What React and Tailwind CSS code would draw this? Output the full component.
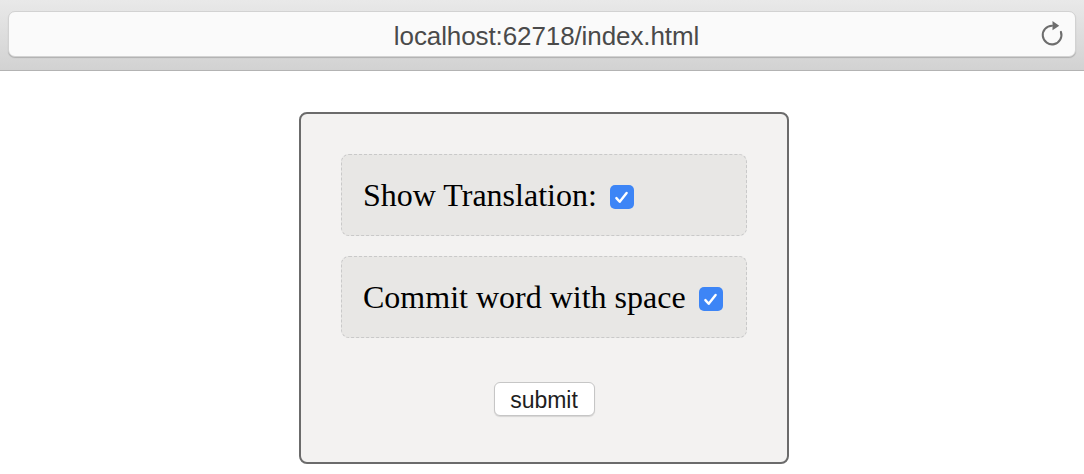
import { useState } from 'react';

const CheckBox = ({ checked, onChange }) => (
    <button
        type="button"
        onClick={onChange}
        className={`ml-[5px] mt-[4px] w-[24px] h-[24px] rounded-[5px] flex items-center justify-center shrink-0 ${checked ? 'bg-[#3d85f6]' : 'bg-white border border-[#999]'}`}
    >
        {checked && (
            <svg width="17" height="17" viewBox="0 0 16 16" fill="none">
                <path d="M3.2 8.6l3.1 3.4L12.8 3.8" stroke="white" strokeWidth="2.3" strokeLinecap="round" strokeLinejoin="round" />
            </svg>
        )}
    </button>
);

const OptionRow = ({ label, checked, onChange }) => (
    <div className="h-[82px] flex items-center px-[21px] bg-[#e8e7e5] border border-dashed border-[#c9c9c9] rounded-[8px]">
        <span className="text-[32px] leading-none text-black whitespace-pre" style={{ fontFamily: '"Liberation Serif", "Times New Roman", serif' }}>
            {label}{' '}
        </span>
        <CheckBox checked={checked} onChange={onChange} />
    </div>
);

export default function App() {
    const [showTranslation, setShowTranslation] = useState(true);
    const [commitSpace, setCommitSpace] = useState(true);

    return (
        <div className="w-[1084px] h-[474px] bg-white overflow-hidden" style={{ fontFamily: '"Liberation Sans", Arial, sans-serif' }}>
            {/* Browser chrome */}
            <div className="h-[71px] bg-gradient-to-b from-[#e9e9e9] to-[#d2d2d2] border-b border-[#b3b3b3] px-[8px] pt-[11px]">
                <div className="relative h-[46px] bg-[#fafafa] rounded-[7px] border border-[#d2d2d2] shadow-[0_1px_1px_rgba(0,0,0,0.18)] flex items-center justify-center pt-[5px] pl-[9px]">
                    <span className="text-[26px] text-[#4a4a4a] tracking-[-0.1px]">localhost:62718/index.html</span>
                    <svg className="absolute right-[9px] top-[8px]" width="26" height="28" viewBox="0 0 24 27" fill="none">
                        <path d="M11 5.5A9 9 0 1 0 19.6 11.5" stroke="#6d6d6d" strokeWidth="2" strokeLinecap="round" />
                        <path d="M11.5 1L18 5.5L11.5 10Z" fill="#6d6d6d" />
                    </svg>
                </div>
            </div>

            {/* Page */}
            <div className="flex justify-center pt-[41px] pl-[4px]">
                <form
                    onSubmit={(e) => e.preventDefault()}
                    className="w-[490px] bg-[#f3f2f1] border-2 border-[#6b6b6b] rounded-[8px] px-[40px] pt-[40px] pb-[46px] flex flex-col"
                >
                    <div className="flex flex-col gap-[20px]">
                        <OptionRow label="Show Translation:" checked={showTranslation} onChange={() => setShowTranslation(!showTranslation)} />
                        <OptionRow label="Commit word with space" checked={commitSpace} onChange={() => setCommitSpace(!commitSpace)} />
                    </div>
                    <div className="flex justify-center mt-[44px]">
                        <button type="submit" className="w-[101px] h-[34px] bg-white border border-[#c6c6c6] rounded-[6px] shadow-[0_1px_1px_rgba(0,0,0,0.12)] text-[23px] text-[#1e1e1e] leading-none pt-[2px]">
                            submit
                        </button>
                    </div>
                </form>
            </div>
        </div>
    );
}
